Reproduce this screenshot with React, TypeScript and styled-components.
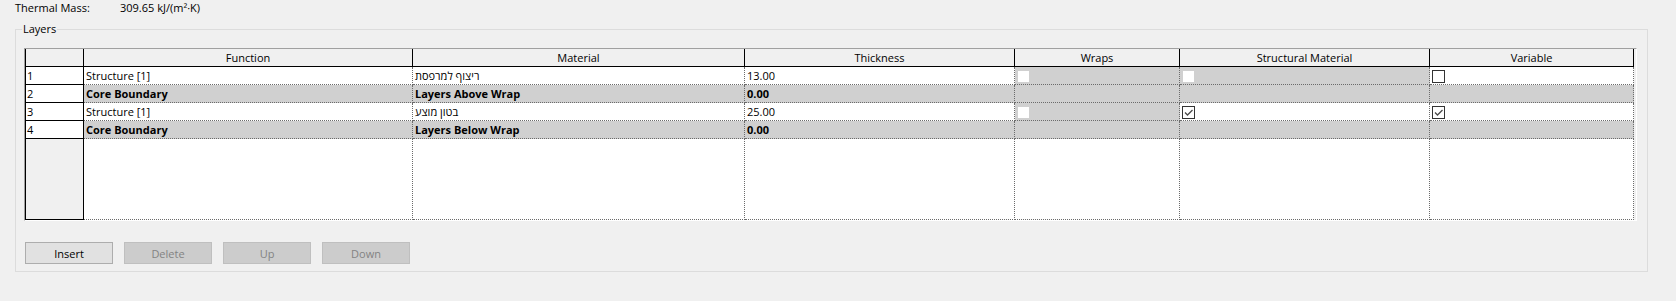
import React from "react";
import styled, { createGlobalStyle } from "styled-components";

const GlobalStyle = createGlobalStyle`
  html, body { margin: 0; padding: 0; background: #f0f0f0; }
  body {
    font-family: "Open Sans", "Noto Sans", "DejaVu Sans", sans-serif;
    font-size: 11px;
    color: #000;
  }
  * { box-sizing: border-box; }
`;

const Page = styled.div`
  width: 1676px;
  height: 301px;
  overflow: hidden;
  background: #f0f0f0;
`;

const TopRow = styled.div`
  display: flex;
  height: 15px;
  line-height: 15px;
  padding-left: 15px;
`;

const TopLabel = styled.span`
  width: 105px;
`;

const GroupBox = styled.fieldset`
  width: 1633px;
  margin: 6px 0 0 15px;
  padding: 11px 10px 7px 8px;
  border: 1px solid #dcdcdc;
  min-width: 0;
`;

const Legend = styled.legend`
  padding: 0 1px;
  margin-left: -2px;
  line-height: 16px;
  font-size: 11px;
`;

const TableFrame = styled.div`
  border-style: solid;
  border-width: 1px;
  border-color: #a0a0a0 #ffffff #ffffff #a0a0a0;
  padding-right: 2px;
`;

const Grid = styled.div`
  display: grid;
  grid-template-columns: 59px 329px 332px 270px 165px 250px 204px;
  grid-template-rows: repeat(5, 18px) 81px;
  background: #ffffff;
`;

const HeaderCell = styled.div<{ $corner?: boolean }>`
  background: #f0f0f0;
  border-right: 1px solid #000;
  border-bottom: 1px solid #000;
  border-left: ${(p) => (p.$corner ? "1px solid #000" : "none")};
  text-align: center;
  line-height: 17px;
  white-space: nowrap;
  overflow: hidden;
`;

const RowNum = styled.div<{ $filler?: boolean }>`
  background: ${(p) => (p.$filler ? "#f0f0f0" : "#ffffff")};
  border-left: 1px solid #000;
  border-right: 1px solid #000;
  border-bottom: 1px solid #000;
  padding-left: 1px;
  line-height: 17px;
`;

const Cell = styled.div<{ $gray?: boolean; $bold?: boolean }>`
  background: ${(p) => (p.$gray ? "#d0d0d0" : "#ffffff")};
  border-right: 1px dotted #6b6b6b;
  border-bottom: 1px dotted #6b6b6b;
  padding-left: 2px;
  font-weight: ${(p) => (p.$bold ? 700 : 400)};
  line-height: 17px;
  white-space: nowrap;
  overflow: hidden;
`;

const BoxCell = styled(Cell)`
  display: flex;
  align-items: flex-start;
  padding-top: 3px;
`;

const CheckBox = styled.span<{ $disabled?: boolean }>`
  display: flex;
  align-items: center;
  justify-content: center;
  width: 13px;
  height: 13px;
  background: #ffffff;
  border: 1px solid ${(p) => (p.$disabled ? "#d0d0d0" : "#333333")};
`;

const ButtonRow = styled.div`
  display: flex;
  gap: 11px;
  margin-top: 21px;
  padding-left: 1px;
`;

const Button = styled.button`
  width: 88px;
  height: 22px;
  padding: 0;
  font-family: inherit;
  font-size: 11px;
  color: #000;
  background: #e1e1e1;
  border: 1px solid #adadad;

  &:disabled {
    background: #cccccc;
    border-color: #bfbfbf;
    color: #838383;
  }
`;

const Check = () => (
  <svg width="11" height="11" viewBox="0 0 11 11">
    <polyline
      points="2,5.5 4.5,8 9.5,3"
      fill="none"
      stroke="#4a4a4a"
      strokeWidth="1.3"
    />
  </svg>
);

type Box = "none" | "disabled" | "off" | "on";

interface Layer {
  fn: string;
  material: string;
  thickness: string;
  core: boolean;
  wraps: Box;
  structural: Box;
  variable: Box;
}

const layers: Layer[] = [
  { fn: "Structure [1]", material: "ריצוף למרפסת", thickness: "13.00", core: false, wraps: "disabled", structural: "disabled", variable: "off" },
  { fn: "Core Boundary", material: "Layers Above Wrap", thickness: "0.00", core: true, wraps: "none", structural: "none", variable: "none" },
  { fn: "Structure [1]", material: "בטון מוצע", thickness: "25.00", core: false, wraps: "disabled", structural: "on", variable: "on" },
  { fn: "Core Boundary", material: "Layers Below Wrap", thickness: "0.00", core: true, wraps: "none", structural: "none", variable: "none" },
];

const headers = ["Function", "Material", "Thickness", "Wraps", "Structural Material", "Variable"];

const BoxField = ({ kind, core }: { kind: Box; core: boolean }) => {
  const gray = core || kind === "disabled";
  return (
    <BoxCell $gray={gray}>
      {kind === "disabled" && <CheckBox $disabled />}
      {kind === "off" && <CheckBox />}
      {kind === "on" && (
        <CheckBox>
          <Check />
        </CheckBox>
      )}
    </BoxCell>
  );
};

export default function App() {
  return (
    <Page>
      <GlobalStyle />
      <TopRow>
        <TopLabel>Thermal Mass:</TopLabel>
        <span>309.65 kJ/(m²·K)</span>
      </TopRow>
      <GroupBox>
        <Legend>Layers</Legend>
        <TableFrame>
          <Grid>
            <HeaderCell $corner />
            {headers.map((h) => (
              <HeaderCell key={h}>{h}</HeaderCell>
            ))}
            {layers.map((l, i) => (
              <React.Fragment key={i}>
                <RowNum>{i + 1}</RowNum>
                <Cell $gray={l.core} $bold={l.core}>{l.fn}</Cell>
                <Cell $gray={l.core} $bold={l.core}>{l.material}</Cell>
                <Cell $gray={l.core} $bold={l.core}>{l.thickness}</Cell>
                <BoxField kind={l.wraps} core={l.core} />
                <BoxField kind={l.structural} core={l.core} />
                <BoxField kind={l.variable} core={l.core} />
              </React.Fragment>
            ))}
            <RowNum $filler />
            {headers.map((h) => (
              <Cell key={h} />
            ))}
          </Grid>
        </TableFrame>
        <ButtonRow>
          <Button>Insert</Button>
          <Button disabled>Delete</Button>
          <Button disabled>Up</Button>
          <Button disabled>Down</Button>
        </ButtonRow>
      </GroupBox>
    </Page>
  );
}
